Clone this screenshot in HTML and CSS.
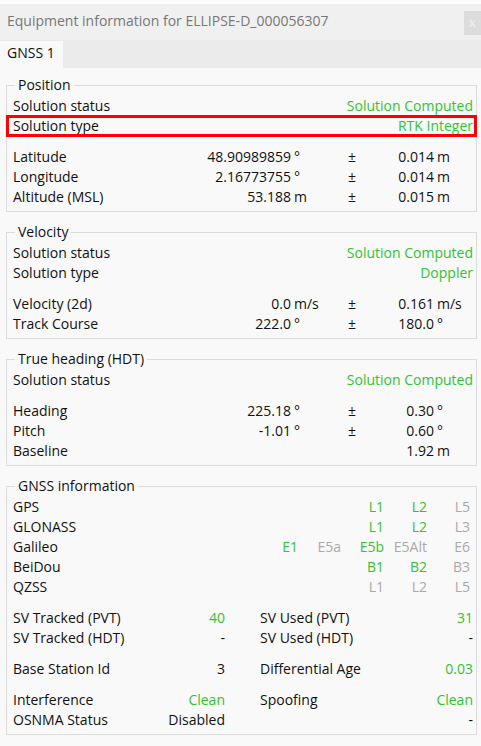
FILE: index.html
```html
<!DOCTYPE html>
<html>
<head>
<meta charset="utf-8">
<link rel="stylesheet" href="styles.css">
</head>
<body>
<div class="topstrip"></div>
<div class="titlebar">
  <span class="title">Equipment information for ELLIPSE-D_000056307</span>
  <span class="close">x</span>
</div>
<div class="tabbar"><div class="tab">GNSS 1</div></div>
<div class="content">
  <fieldset class="group">
    <legend>Position</legend>
    <div class="row"><span>Solution status</span><span class="ok">Solution Computed</span></div>
    <div class="row hl"><span>Solution type</span><span class="ok">RTK Integer</span></div>
    <div class="sp"></div>
    <div class="mrow"><span>Latitude</span><span class="num">48.90989859</span><span class="unit">°</span><span class="pm">±</span><span class="num">0.014</span><span class="unit">m</span></div>
    <div class="mrow"><span>Longitude</span><span class="num">2.16773755</span><span class="unit">°</span><span class="pm">±</span><span class="num">0.014</span><span class="unit">m</span></div>
    <div class="mrow"><span>Altitude (MSL)</span><span class="num">53.188</span><span class="unit">m</span><span class="pm">±</span><span class="num">0.015</span><span class="unit">m</span></div>
  </fieldset>

  <fieldset class="group">
    <legend>Velocity</legend>
    <div class="row"><span>Solution status</span><span class="ok">Solution Computed</span></div>
    <div class="row"><span>Solution type</span><span class="ok">Doppler</span></div>
    <div class="sp"></div>
    <div class="mrow"><span>Velocity (2d)</span><span class="num">0.0</span><span class="unit">m/s</span><span class="pm">±</span><span class="num">0.161</span><span class="unit">m/s</span></div>
    <div class="mrow"><span>Track Course</span><span class="num">222.0</span><span class="unit">°</span><span class="pm">±</span><span class="num">180.0</span><span class="unit">°</span></div>
  </fieldset>

  <fieldset class="group">
    <legend>True heading (HDT)</legend>
    <div class="row"><span>Solution status</span><span class="ok">Solution Computed</span></div>
    <div class="sp"></div>
    <div class="mrow"><span>Heading</span><span class="num">225.18</span><span class="unit">°</span><span class="pm">±</span><span class="num">0.30</span><span class="unit">°</span></div>
    <div class="mrow"><span>Pitch</span><span class="num">-1.01</span><span class="unit">°</span><span class="pm">±</span><span class="num">0.60</span><span class="unit">°</span></div>
    <div class="mrow"><span>Baseline</span><span class="num"></span><span class="unit"></span><span class="pm"></span><span class="num">1.92</span><span class="unit">m</span></div>
  </fieldset>

  <fieldset class="group">
    <legend>GNSS information</legend>
    <div class="sig"><span>GPS</span><span></span><span></span><span class="ok">L1</span><span class="ok">L2</span><span class="off">L5</span></div>
    <div class="sig"><span>GLONASS</span><span></span><span></span><span class="ok">L1</span><span class="ok">L2</span><span class="off">L3</span></div>
    <div class="sig"><span>Galileo</span><span class="ok">E1</span><span class="off">E5a</span><span class="ok">E5b</span><span class="off">E5Alt</span><span class="off">E6</span></div>
    <div class="sig"><span>BeiDou</span><span></span><span></span><span class="ok">B1</span><span class="ok">B2</span><span class="off">B3</span></div>
    <div class="sig"><span>QZSS</span><span></span><span></span><span class="off">L1</span><span class="off">L2</span><span class="off">L5</span></div>
    <div class="sp"></div>
    <div class="pair">
      <div class="half"><span>SV Tracked (PVT)</span><span class="ok">40</span></div>
      <div class="half"><span>SV Used (PVT)</span><span class="ok">31</span></div>
    </div>
    <div class="pair">
      <div class="half"><span>SV Tracked (HDT)</span><span>-</span></div>
      <div class="half"><span>SV Used (HDT)</span><span>-</span></div>
    </div>
    <div class="sp"></div>
    <div class="pair">
      <div class="half"><span>Base Station Id</span><span>3</span></div>
      <div class="half"><span>Differential Age</span><span class="ok">0.03</span></div>
    </div>
    <div class="sp"></div>
    <div class="pair">
      <div class="half"><span>Interference</span><span class="ok">Clean</span></div>
      <div class="half"><span>Spoofing</span><span class="ok">Clean</span></div>
    </div>
    <div class="pair">
      <div class="half"><span>OSNMA Status</span><span>Disabled</span></div>
      <div class="half"><span></span><span>-</span></div>
    </div>
  </fieldset>
</div>
</body>
</html>
```

FILE: styles.css
```css
* { box-sizing: border-box; }
html, body { margin: 0; padding: 0; }
body {
  width: 481px;
  height: 746px;
  overflow: hidden;
  background: #f9f9f9;
  font-family: "Open Sans", "Noto Sans", sans-serif;
  font-size: 14px;
  color: #111111;
}
.topstrip { height: 4px; background: #fcfcfc; }
.titlebar {
  height: 36px;
  background: #f0f0f0;
  display: flex;
  align-items: center;
  justify-content: space-between;
  padding-left: 7px;
  padding-bottom: 2px;
}
.title { color: #777777; line-height: 20px; white-space: nowrap; }
.close {
  align-self: flex-start;
  margin-top: 7px;
  width: 17px;
  height: 24px;
  background: #dcdcdc;
  color: #f2f2f2;
  font-size: 13px;
  line-height: 22px;
  padding-left: 5px;
  overflow: hidden;
}
.tabbar {
  height: 28px;
  background: #ebebeb;
  display: flex;
  align-items: flex-end;
}
.tab {
  width: 63px;
  height: 27px;
  background: #f9f9f9;
  padding-left: 7px;
  line-height: 24px;
  white-space: nowrap;
}
.content { padding: 7px 4px 0 6px; }
.group {
  margin: 0 0 10px 0;
  border: 1px solid #dcdcdc;
  padding: 1px 3px 4px 6px;
  min-width: 0;
}
.group legend {
  padding: 0 3px;
  margin-left: 2px;
  line-height: 20px;
}
.row {
  display: flex;
  justify-content: space-between;
  height: 20px;
  line-height: 20px;
  white-space: nowrap;
}
.hl {
  margin: 0 -3px 0 -6px;
  padding: 0 3px 0 6px;
  outline: 3px solid #f00;
  outline-offset: -2px;
}
.sp { height: 11px; }
.ok { color: #33c233; }
.off { color: #a9a9a9; }
.mrow {
  display: grid;
  grid-template-columns: 160px 118px 40px 42px 61px 1fr;
  height: 20px;
  line-height: 20px;
  white-space: nowrap;
}
.num { text-align: right; }
.unit { padding-left: 3px; }
.pm { text-align: center; }
.sig {
  display: grid;
  grid-template-columns: 1fr repeat(5, 43px);
  padding-right: 3px;
  height: 20px;
  line-height: 20px;
  white-space: nowrap;
}
.sig span { text-align: right; }
.sig span:first-child { text-align: left; }
.pair {
  display: grid;
  grid-template-columns: 212px 1fr;
  column-gap: 35px;
  height: 20px;
  line-height: 20px;
}
.half {
  display: flex;
  justify-content: space-between;
  white-space: nowrap;
}
```
